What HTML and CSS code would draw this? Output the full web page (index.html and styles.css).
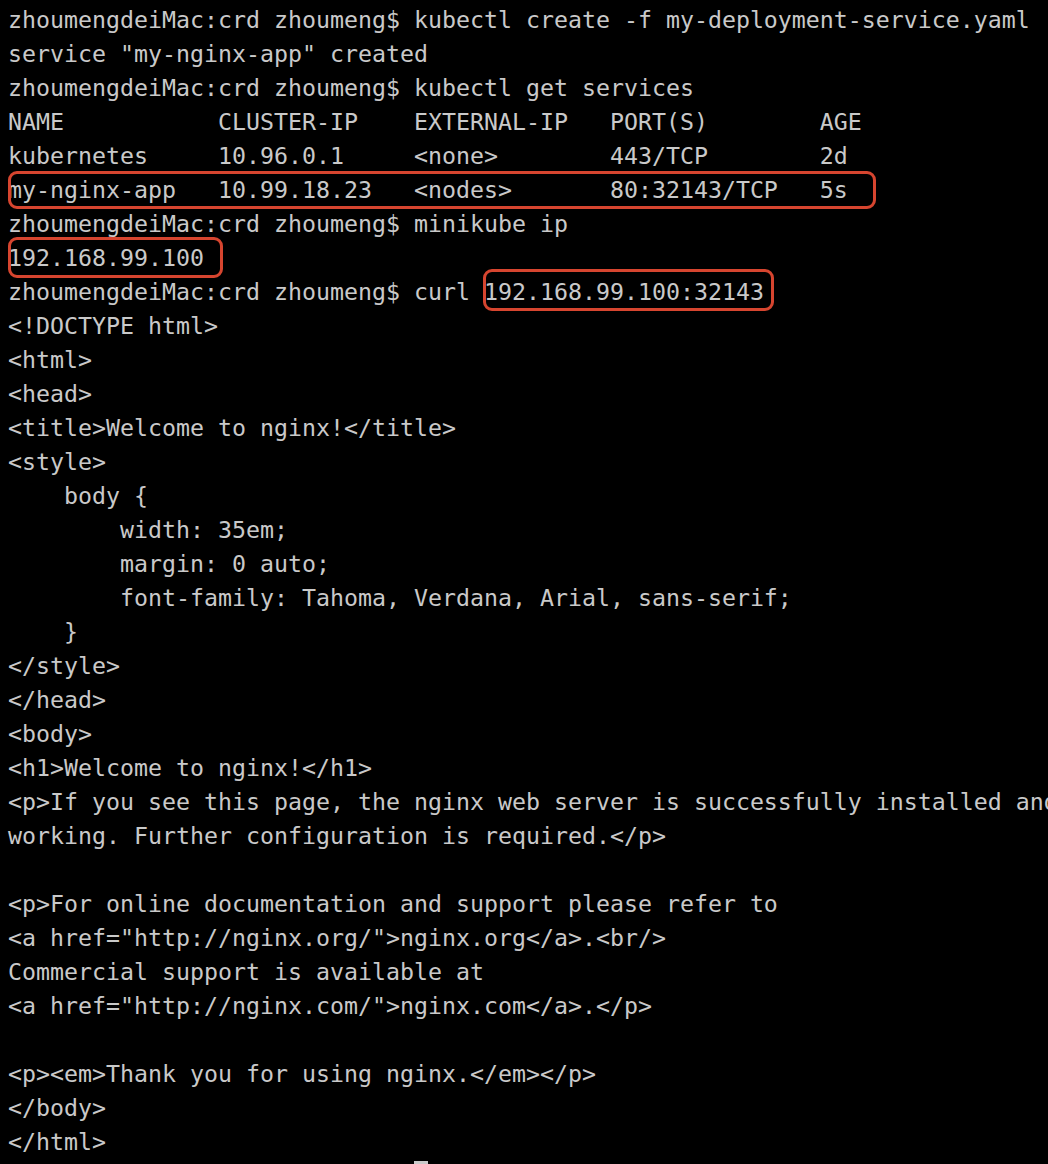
FILE: index.html
```html
<!DOCTYPE html>
<html lang="en">
<head>
<meta charset="utf-8">
<title>Terminal</title>
<link rel="stylesheet" href="styles.css">
</head>
<body>
<div class="terminal">
<pre class="output">zhoumengdeiMac:crd zhoumeng$ kubectl create -f my-deployment-service.yaml
service "my-nginx-app" created
zhoumengdeiMac:crd zhoumeng$ kubectl get services
NAME           CLUSTER-IP    EXTERNAL-IP   PORT(S)        AGE
kubernetes     10.96.0.1     &lt;none&gt;        443/TCP        2d
my-nginx-app   10.99.18.23   &lt;nodes&gt;       80:32143/TCP   5s
zhoumengdeiMac:crd zhoumeng$ minikube ip
192.168.99.100
zhoumengdeiMac:crd zhoumeng$ curl 192.168.99.100:32143
&lt;!DOCTYPE html&gt;
&lt;html&gt;
&lt;head&gt;
&lt;title&gt;Welcome to nginx!&lt;/title&gt;
&lt;style&gt;
    body {
        width: 35em;
        margin: 0 auto;
        font-family: Tahoma, Verdana, Arial, sans-serif;
    }
&lt;/style&gt;
&lt;/head&gt;
&lt;body&gt;
&lt;h1&gt;Welcome to nginx!&lt;/h1&gt;
&lt;p&gt;If you see this page, the nginx web server is successfully installed and
working. Further configuration is required.&lt;/p&gt;

&lt;p&gt;For online documentation and support please refer to
&lt;a href="http://nginx.org/"&gt;nginx.org&lt;/a&gt;.&lt;br/&gt;
Commercial support is available at
&lt;a href="http://nginx.com/"&gt;nginx.com&lt;/a&gt;.&lt;/p&gt;

&lt;p&gt;&lt;em&gt;Thank you for using nginx.&lt;/em&gt;&lt;/p&gt;
&lt;/body&gt;
&lt;/html&gt;
                             <span class="cursor"> </span></pre>
<div class="mark mark-row"></div>
<div class="mark mark-ip"></div>
<div class="mark mark-url"></div>
</div>
</body>
</html>
```
FILE: styles.css
```css
html, body {
  margin: 0;
  padding: 0;
  background: #000;
  height: 100%;
  overflow: hidden;
}

.terminal {
  position: relative;
  padding: 3px 0 0 8px;
  height: 100%;
  box-sizing: border-box;
  overflow: hidden;
}

.output {
  margin: 0;
  font-family: "DejaVu Sans Mono", "Liberation Mono", monospace;
  font-size: 23.26px;
  line-height: 34px;
  color: #c9c9c9;
  white-space: pre;
}

.cursor {
  display: inline-block;
  width: 14px;
  height: 34px;
  vertical-align: top;
  margin-top: 2px;
  background: #c9c9c9;
}

.mark {
  position: absolute;
  border: 3.5px solid #d6452f;
  border-radius: 9px;
  box-sizing: border-box;
}

.mark-row {
  left: 8px;
  top: 171px;
  width: 868px;
  height: 38px;
}

.mark-ip {
  left: 8px;
  top: 237px;
  width: 215px;
  height: 41px;
}

.mark-url {
  left: 483px;
  top: 269px;
  width: 291px;
  height: 42px;
}
```
